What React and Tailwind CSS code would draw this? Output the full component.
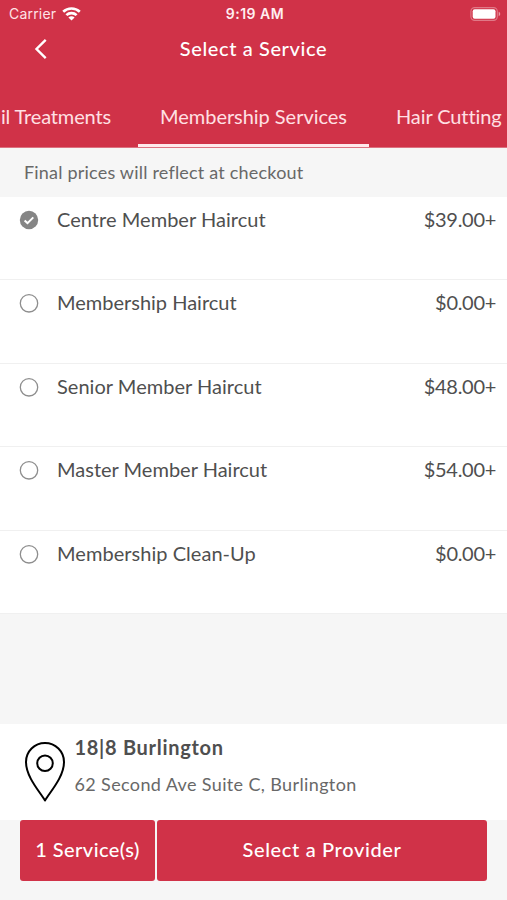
import React from "react";

const services = [
  { name: "Centre Member Haircut", price: "$39.00+", selected: true, tracking: "tracking-[0.04px]" },
  { name: "Membership Haircut", price: "$0.00+", tracking: "tracking-[0px]" },
  { name: "Senior Member Haircut", price: "$48.00+", tracking: "tracking-[0.03px]" },
  { name: "Master Member Haircut", price: "$54.00+", tracking: "tracking-[0.01px]" },
  { name: "Membership Clean-Up", price: "$0.00+", tracking: "tracking-[0.04px]" },
];

function WifiIcon() {
  return (
    <svg className="ml-[6px] h-[14px] w-[19px]" viewBox="0 0 19 14" fill="none" stroke="white" strokeWidth="2.7">
      <path d="M1.2 4.7C5.8.4 13.2.4 17.8 4.7" />
      <path d="M4.4 8.1c2.8-2.7 7.4-2.7 10.2 0" />
      <path d="M9.5 13.6 6.4 10.5c1.7-1.6 4.5-1.6 6.2 0z" fill="white" stroke="none" />
    </svg>
  );
}

function BatteryIcon() {
  return (
    <svg className="-mt-px h-[14px] w-[31px]" viewBox="0 0 31 14">
      <rect x="0.9" y="0.6" width="26.4" height="12.8" rx="3.8" fill="none" stroke="white" strokeOpacity="0.35" strokeWidth="1.1" />
      <rect x="2.7" y="2.3" width="22.8" height="9.4" rx="2" fill="white" />
      <path d="M28.7 4.8c2 .7 2 3.7 0 4.4z" fill="white" fillOpacity="0.5" />
    </svg>
  );
}

function Radio({ selected }) {
  return (
    <svg className="mt-[13px] ml-[19px] h-5 w-5 shrink-0" viewBox="0 0 20 20" fill="none">
      {selected ? (
        <>
          <circle cx="10" cy="10" r="9.2" fill="#858585" />
          <path d="m5.6 10.4 2.9 2.7 5.8-5.7" stroke="white" strokeWidth="2" />
        </>
      ) : (
        <circle cx="10" cy="10.3" r="8.7" stroke="#8e8e8e" strokeWidth="1.3" />
      )}
    </svg>
  );
}

export default function App() {
  return (
    <div className="flex h-[900px] w-[507px] flex-col overflow-hidden bg-[#f6f6f6] font-['Lato',sans-serif] text-[#4f4f4f]">
      <header className="flex h-[148px] shrink-0 flex-col border-b border-[#dc7280] bg-[#d03248] text-white">
        <div className="grid h-7 shrink-0 grid-cols-3 items-center pr-[6px] pl-[9px] font-['Inter',sans-serif] text-sm">
          <div className="flex items-center text-[#ffe3e6]">
            <span className="tracking-[0.2px]">Carrier</span>
            <WifiIcon />
          </div>
          <span className="text-center font-semibold tracking-[0.5px] whitespace-nowrap text-[#ffeef0]">9:19 AM</span>
          <div className="flex justify-end">
            <BatteryIcon />
          </div>
        </div>
        <div className="grid h-[42px] shrink-0 grid-cols-[60px_1fr_60px] items-center">
          <svg className="ml-[33px] h-[22px] w-4" viewBox="0 0 16 22" fill="none" stroke="white" strokeWidth="2.4">
            <path d="M12.7 1.9 3.5 11l9.2 9.1" />
          </svg>
          <h1 className="pb-[2px] text-center text-[20px] font-medium tracking-[0.6px]">Select a Service</h1>
        </div>
        <nav className="flex h-[77px] shrink-0 text-[20px] whitespace-nowrap text-[#ffe0e4]">
          <div className="flex w-[138px] justify-end pt-[34px] pr-[27px] leading-6 tracking-[-0.14px]">Nail Treatments</div>
          <div className="flex w-[231px] shrink-0 justify-center border-b-[3px] border-[#ffe9ec] pt-[34px] leading-6 tracking-[-0.04px]">
            Membership Services
          </div>
          <div className="pt-[34px] pl-[27px] leading-6 tracking-[-0.1px]">Hair Cutting</div>
        </nav>
      </header>

      <p className="h-[49px] shrink-0 pl-6 text-[18px] leading-[48px] tracking-[0.2px] text-[#686868]">
        Final prices will reflect at checkout
      </p>

      <ul className="shrink-0 bg-white">
        {services.map((service) => (
          <li key={service.name} className="flex h-[83.4px] border-b border-[#f0f0f0] pr-[11px]">
            <Radio selected={service.selected} />
            <span className={`ml-[18px] text-[20px] leading-[44px] ${service.tracking}`}>{service.name}</span>
            <span className="ml-auto text-[20px] leading-[44px] tracking-[-0.3px]">{service.price}</span>
          </li>
        ))}
      </ul>

      <section className="mt-auto flex h-24 shrink-0 bg-white">
        <svg className="mt-[17px] ml-[24px] h-[62px] w-[42px]" viewBox="0 0 42 62" fill="none" stroke="black" strokeWidth="2">
          <path d="M21 59.4C16 51 2 36 2 21A19 19 0 0 1 40 21C40 36 26 51 21 59.4Z" strokeLinejoin="round" />
          <circle cx="21" cy="22.3" r="7.8" />
        </svg>
        <div className="ml-[8.5px]">
          <h2 className="pt-[11px] text-[20px] leading-6 font-bold tracking-[0.7px]">18|8 Burlington</h2>
          <p className="pt-[13px] text-[18px] leading-6 tracking-[0.37px] text-[#686868]">62 Second Ave Suite C, Burlington</p>
        </div>
      </section>

      <footer className="flex h-20 shrink-0 gap-[2px] pr-[20px] pb-[19.5px] pl-[20px] text-[20px] text-white">
        <button className="w-[135px] rounded-[3px] bg-[#d03248] pb-[3px] font-medium tracking-[0.45px]">1 Service(s)</button>
        <button className="flex-1 rounded-[3px] bg-[#d03248] pb-[3px] font-medium tracking-[0.65px]">Select a Provider</button>
      </footer>
    </div>
  );
}
